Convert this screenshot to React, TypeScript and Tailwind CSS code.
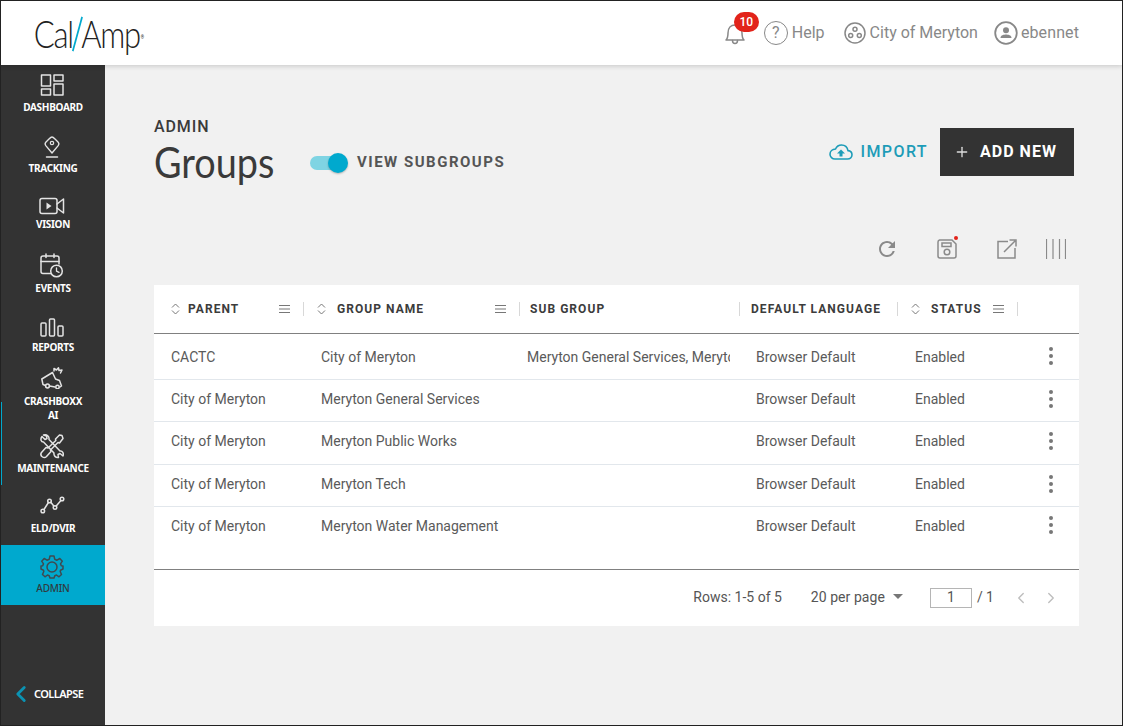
import { ChevronLeft, ChevronRight, Plus } from 'lucide-react';
import { MdRefresh } from 'react-icons/md';
import type { ReactNode } from 'react';

const stroke = {
  fill: 'none',
  stroke: 'currentColor',
  strokeWidth: 1.5,
  strokeLinecap: 'round' as const,
  strokeLinejoin: 'round' as const,
};

const DashboardIcon = () => (
  <svg width="24" height="22" viewBox="0 0 24 22" {...stroke}>
    <rect x="1.5" y="1" width="9" height="11" />
    <rect x="14" y="1" width="9" height="6" />
    <rect x="1.5" y="15" width="9" height="6" />
    <rect x="14" y="10" width="9" height="11" />
  </svg>
);

const TrackingIcon = () => (
  <svg width="16" height="22" viewBox="0 0 16 22" {...stroke}>
    <path d="M8 1 C9 1 10 2 11 3 L14 6 C15 7 15 8.5 14.2 9.6 L8 17 L1.8 9.6 C1 8.5 1 7 2 6 L5 3 C6 2 7 1 8 1 Z" strokeWidth="1.4" />
    <circle cx="8" cy="7" r="1.7" strokeWidth="1.2" />
    <path d="M2.5 21 H13.5" />
  </svg>
);

const VisionIcon = () => (
  <svg width="26" height="18" viewBox="0 0 26 18" {...stroke}>
    <rect x="1" y="1.5" width="17" height="15" rx="2" />
    <path d="M7.5 5.5 L12.5 9 L7.5 12.5 Z" fill="currentColor" stroke="none" />
    <path d="M18 7 L24.5 2 V16 L18 11" />
  </svg>
);

const EventsIcon = () => (
  <svg width="24" height="25" viewBox="0 0 24 25" {...stroke}>
    <path d="M11 20.5 H3 a2 2 0 0 1 -2 -2 V5 a2 2 0 0 1 2 -2 H17 a2 2 0 0 1 2 2 V11" />
    <path d="M1 8.5 H19" />
    <path d="M6 1 V4.5 M14 1 V4.5" />
    <circle cx="16.5" cy="18" r="5.8" />
    <path d="M16.5 14.8 V18.2 L19 19.4" strokeWidth="1.3" />
  </svg>
);

const ReportsIcon = () => (
  <svg width="24" height="19" viewBox="0 0 24 19" {...stroke}>
    <rect x="1" y="5" width="5" height="13" rx="1" />
    <rect x="9.5" y="1" width="5" height="17" rx="1" />
    <rect x="18" y="8" width="5" height="10" rx="1" />
  </svg>
);

const CrashIcon = () => (
  <svg width="22" height="22" viewBox="0 0 22 22" {...stroke}>
    <path d="M4.5 18.5 L2 17.5 L0.8 12 L11.5 5.5 L14.5 12 L18.5 13.5 L20.5 19 L19 20" />
    <path d="M8.5 19 L14 20" />
    <circle cx="6.5" cy="19" r="1.9" />
    <circle cx="16.5" cy="20" r="1.7" />
    <path d="M13 4 L13 1.5 L15.5 3 L17.5 0.8 L18 3.5 L21 3 L19.5 6" />
  </svg>
);

const MaintenanceIcon = () => (
  <svg width="24" height="25" viewBox="0 0 24 25" {...stroke}>
    <path d="M2 2.5 L5 5.5 L7 4.5 L6.5 2 L3.5 1 C7 0 9.5 2.5 9 5.5 L20 17 C22.5 16.5 24 19.5 23 22 L20 19.5 L18 20.5 L18.5 23.5 C15.5 24 13.5 21.5 14 19 L3.5 8 C1 8 0 5 2 2.5 Z" />
    <path d="M22 1.5 L19.5 1 L15.5 5 L15.8 6.5 L8 14 L6 13.5 L1.5 18.5 C0.5 20 1 22 2.5 23 C4 24 5.5 23.5 6.5 22.5 L11 17.5 L10.5 16 L18 8.5 L19.5 9 L23 4.5 Z" />
  </svg>
);

const EldIcon = () => (
  <svg width="25" height="18" viewBox="0 0 25 18" {...stroke}>
    <circle cx="2.8" cy="15" r="1.8" />
    <circle cx="9.5" cy="5" r="1.8" />
    <circle cx="15" cy="11.5" r="1.8" />
    <circle cx="22" cy="3" r="1.8" />
    <path d="M4 13.5 L8.4 6.5 M10.8 6.3 L13.8 10 M16.2 10 L20.9 4.5" />
  </svg>
);

const GearIcon = () => (
  <svg width="24" height="24" viewBox="0 0 24 24" {...stroke}>
    <circle cx="12" cy="12" r="5" />
    <path d="M10 1 H14 L14.7 4.2 L17 5.2 L19.8 3.5 L22.3 6.2 L20.5 8.9 L21.3 10.8 L23 11 V14 L20.5 15.2 L20.2 16.5 L21.5 19.5 L19 21.8 L16.5 20 L14.8 20.7 L14 23 H10 L9.2 20.7 L7.5 20 L5 21.8 L2.5 19.5 L3.8 16.5 L3.5 15.2 L1 14 V11 L2.7 10.8 L3.5 8.9 L1.7 6.2 L4.2 3.5 L7 5.2 L9.3 4.2 Z" />
  </svg>
);

const BellIcon = () => (
  <svg width="22" height="24" viewBox="0 0 22 24" {...stroke}>
    <path d="M2 18 C4 16 4 14 4 11 C4 6 7 3 11 3 C15 3 18 6 18 11 C18 14 18 16 20 18 Z" />
    <path d="M8.5 18.5 C8.5 22.5 13.5 22.5 13.5 18.5" />
  </svg>
);

const GroupIcon = () => (
  <svg width="22" height="22" viewBox="0 0 22 22" {...stroke}>
    <circle cx="11" cy="11" r="10" />
    <circle cx="11" cy="7.3" r="2" />
    <circle cx="6.7" cy="13.5" r="2" />
    <circle cx="15.3" cy="13.5" r="2" />
  </svg>
);

const UserIcon = () => (
  <svg width="24" height="24" viewBox="0 0 24 24" fill="none">
    <circle cx="12" cy="12" r="10.8" stroke="currentColor" strokeWidth="1.8" />
    <circle cx="12" cy="9.2" r="3" fill="currentColor" />
    <path d="M6.5 17 C6.5 14 10 13.5 12 13.5 C14 13.5 17.5 14 17.5 17 Z" fill="currentColor" />
  </svg>
);

const CloudIcon = () => (
  <svg width="24" height="16" viewBox="0 0 24 16" fill="none">
    <path
      d="M6 15 H18.5 C21 15 23 13.2 23 10.8 C23 8.5 21.3 6.8 19 6.6 C18.3 3.2 15.6 1 12.5 1 C9.8 1 7.6 2.6 6.5 5 C3.4 5.2 1 7.4 1 10.2 C1 12.8 3.2 15 6 15 Z"
      stroke="currentColor"
      strokeWidth="1.6"
    />
    <path d="M12 5.5 L16 9.5 H13.5 V12.5 H10.5 V9.5 H8 Z" fill="currentColor" />
  </svg>
);

const SortIcon = () => (
  <svg width="9" height="12" viewBox="0 0 9 12" fill="none" stroke="#777" strokeWidth="1">
    <path d="M1 4.5 L4.5 1 L8 4.5" />
    <path d="M1 7.5 L4.5 11 L8 7.5" />
  </svg>
);

const MenuIcon = () => (
  <svg width="11" height="8" viewBox="0 0 11 8" stroke="#777" strokeWidth="1">
    <path d="M0 0.5 H11 M0 4 H11 M0 7.5 H11" />
  </svg>
);

const Kebab = () => (
  <div className="flex flex-col gap-[3px]">
    <span className="w-1 h-1 rounded-full bg-[#777]" />
    <span className="w-1 h-1 rounded-full bg-[#777]" />
    <span className="w-1 h-1 rounded-full bg-[#777]" />
  </div>
);

type NavEntry = {
  label: ReactNode;
  icon: ReactNode;
  box: string;
  spot: string;
};

const navItems: NavEntry[] = [
  { label: 'DASHBOARD', icon: <DashboardIcon />, box: 'h-[60px]', spot: 'h-[35px] pt-[5px]' },
  { label: 'TRACKING', icon: <TrackingIcon />, box: 'h-[56px]', spot: 'h-[36px] pt-[8px]' },
  { label: 'VISION', icon: <VisionIcon />, box: 'h-[64px]', spot: 'h-[36px] pt-[14px]' },
  { label: 'EVENTS', icon: <EventsIcon />, box: 'h-[59px]', spot: 'h-[36px] pt-[4px]' },
  { label: 'REPORTS', icon: <ReportsIcon />, box: 'h-[54px]', spot: 'h-[36px] pt-[10px]' },
  { label: <>CRASHBOXX<br />AI</>, icon: <CrashIcon />, box: 'h-[67px]', spot: 'h-[36px] pt-[4px]' },
  { label: 'MAINTENANCE', icon: <MaintenanceIcon />, box: 'h-[60px]', spot: 'h-[36px] pt-[6px]' },
  { label: 'ELD/DVIR', icon: <EldIcon />, box: 'h-[60px]', spot: 'h-[36px] pt-[4px]' },
];

const NavItem = ({ item }: { item: NavEntry }) => (
  <div className={`flex flex-col items-center text-[#e4e4e4] ${item.box}`}>
    <div className={`flex items-center justify-center pr-[2px] ${item.spot}`}>{item.icon}</div>
    <div className="text-[10px] leading-[14px] font-bold text-center text-white tracking-[-0.3px] font-['Noto_Sans',sans-serif]">
      {item.label}
    </div>
  </div>
);

const Sidebar = () => (
  <aside className="w-[104px] shrink-0 bg-[#333333] flex flex-col relative">
    <div className="absolute left-0 top-[337px] h-[83px] w-px bg-[#00a9ce]" />
    {navItems.map((item, i) => (
      <NavItem key={i} item={item} />
    ))}
    <div className="h-[60px] bg-[#00a9ce] flex flex-col items-center text-[#3f4a50]">
      <div className="h-[36px] pt-[8px] pr-[2px] flex items-center justify-center">
        <GearIcon />
      </div>
      <div className="text-[10px] leading-[14px] font-medium text-[#2f3b40] tracking-[-0.2px] font-['Noto_Sans',sans-serif]">
        ADMIN
      </div>
    </div>
    <div className="mt-auto h-[62px] flex items-start pt-[21px] pl-[7px]">
      <ChevronLeft size={26} strokeWidth={2.6} className="text-[#0b93b3] -mt-[3px]" />
      <span className="text-[11px] leading-[20px] font-semibold text-white tracking-[-0.55px] font-['Noto_Sans',sans-serif]">
        COLLAPSE
      </span>
    </div>
  </aside>
);

const Header = () => (
  <header className="h-[64px] shrink-0 bg-white flex items-center justify-between relative z-10 shadow-[0_1px_5px_rgba(0,0,0,0.18)]">
    <div className="flex items-center pl-[39px] text-[#222] origin-left scale-x-[0.84]">
      <span className="font-['Lato',sans-serif] font-light text-[37px] leading-none tracking-[-1.5px]">Cal</span>
      <span className="w-[2px] h-[36px] bg-[#00a9ce] rotate-[18deg] mx-[4px] mt-[2px]" />
      <span className="font-['Lato',sans-serif] font-light text-[37px] leading-none tracking-[-1.5px]">Amp</span>
      <span className="text-[5px] self-start mt-[20px] ml-[1px]">®</span>
    </div>
    <div className="flex items-center pr-[43px] text-[#888888] text-[16px] font-['Roboto',sans-serif]">
      <div className="relative mr-[18px] mt-[2px]">
        <BellIcon />
        <span className="absolute -top-[10px] left-[10px] w-[25px] h-[20px] rounded-full bg-[#e2231a] text-white text-[12px] font-medium flex items-center justify-center">
          10
        </span>
      </div>
      <div className="w-[24px] h-[24px] rounded-full border-[1.5px] border-[#888] flex items-center justify-center text-[16px] text-[#888] mr-[4px]">
        ?
      </div>
      <span>Help</span>
      <span className="ml-[19px] mr-[4px]"><GroupIcon /></span>
      <span>City of Meryton</span>
      <span className="ml-[16px] mr-[3px]"><UserIcon /></span>
      <span className="tracking-[0.1px]">ebennet</span>
    </div>
  </header>
);

const gridCols = 'grid grid-cols-[150px_216px_220px_158px_120px_61px]';

const HeadCell = ({ label, sort, menu, pad, gap }: { label: string; sort?: boolean; menu?: boolean; pad: string; gap?: string }) => (
  <div className={`flex items-center h-[14px] border-r border-[#d8d8d8] ${pad}`}>
    {sort && <span className={`flex ${gap}`}><SortIcon /></span>}
    <span className="text-[12px] font-bold tracking-[1.05px] text-[#3c3c3c] whitespace-nowrap">{label}</span>
    {menu && <span className="ml-auto flex"><MenuIcon /></span>}
  </div>
);

const rows = [
  { parent: 'CACTC', name: 'City of Meryton', sub: 'Meryton General Services, Meryton Public Works', h: 'h-[46px] pt-[1px]' },
  { parent: 'City of Meryton', name: 'Meryton General Services', sub: '', h: 'h-[42px] pb-[2px]' },
  { parent: 'City of Meryton', name: 'Meryton Public Works', sub: '', h: 'h-[43px] pb-[3px]' },
  { parent: 'City of Meryton', name: 'Meryton Tech', sub: '', h: 'h-[42px] pb-[2px]' },
];

const Row = ({ parent, name, sub, h, last }: { parent: string; name: string; sub: string; h: string; last?: boolean }) => (
  <div className={`${gridCols} items-center text-[14px] text-[#5a5a5a] ${h} ${last ? '' : 'border-b border-[#e2e7ec]'}`}>
    <div className="pl-[17px]">{parent}</div>
    <div className="pl-[17px] whitespace-nowrap">{name}</div>
    <div className="ml-[7px] w-[203px] overflow-hidden whitespace-nowrap">{sub}</div>
    <div className="pl-[16px]">Browser Default</div>
    <div className="pl-[17px]">Enabled</div>
    <div className="flex justify-end pr-[26px] -mt-[2px]"><Kebab /></div>
  </div>
);

const GroupsTable = () => (
  <div className="bg-white h-[341px] flex flex-col">
    <div className={`${gridCols} h-[49px] items-center border-b border-[#808080] shrink-0`}>
      <HeadCell label="PARENT" sort menu pad="pl-[17px] pr-[13px]" gap="mr-[8px]" />
      <HeadCell label="GROUP NAME" sort menu pad="pl-[13px] pr-[13px]" gap="mr-[11px]" />
      <HeadCell label="SUB GROUP" pad="pl-[10px]" />
      <HeadCell label="DEFAULT LANGUAGE" pad="pl-[11px]" />
      <HeadCell label="STATUS" sort menu pad="pl-[13px] pr-[13px]" gap="mr-[11px]" />
      <div />
    </div>
    {rows.map((r) => (
      <Row key={r.name} {...r} />
    ))}
    <Row parent="City of Meryton" name="Meryton Water Management" sub="" h="h-[40px] pb-[2px]" last />
    <div className="flex-1 border-b border-[#808080]" />
    <div className="h-[56px] shrink-0 flex items-center justify-end pr-[19px] pb-[1px] text-[14px] text-[#555]">
      <span>Rows: 1-5 of 5</span>
      <span className="ml-[29px] tracking-[0.05px]">20 per page</span>
      <span className="ml-[8px] mb-[3px] w-0 h-0 border-x-[5px] border-x-transparent border-t-[5px] border-t-[#777]" />
      <div className="ml-[27px] w-[42px] h-[20px] border border-[#b5b5b5] flex items-center justify-center">1</div>
      <span className="ml-[5px]">/ 1</span>
      <ChevronLeft size={18} strokeWidth={1.8} className="ml-[18px] text-[#bdbdbd]" />
      <ChevronRight size={18} strokeWidth={1.8} className="ml-[12px] text-[#bdbdbd]" />
    </div>
  </div>
);

const Toolbar = () => (
  <div className="flex justify-end items-center h-[26px] text-[#8a8a8a] pr-[13px]">
    <MdRefresh size={24} />
    <span className="relative ml-[38px]">
      <svg width="20" height="20" viewBox="0 0 20 20" fill="none" stroke="currentColor" strokeWidth="1.5" className="block">
        <path d="M2.5 1 H15 L19 5 V17 a2 2 0 0 1 -2 2 H3 a2 2 0 0 1 -2 -2 V3 a2 2 0 0 1 1.5 -2 Z" />
        <rect x="5" y="4" width="9" height="3.5" />
        <circle cx="10" cy="13" r="2.8" />
      </svg>
      <span className="absolute -top-[3px] -right-[1px] w-[4px] h-[4px] rounded-full bg-[#e2231a]" />
    </span>
    <svg className="ml-[40px]" width="20" height="20" viewBox="0 0 20 20" fill="none" stroke="currentColor" strokeWidth="1.5">
      <path d="M11 2.5 H1 V19 H18 V9" />
      <path d="M7 13 L18 2 M12.5 1 H19 V7.5" />
    </svg>
    <svg className="ml-[29px]" width="20" height="20" viewBox="0 0 20 20" stroke="currentColor" strokeWidth="1.2">
      <path d="M0.5 0 V20 M7 0 V20 M13.5 0 V20 M19.5 0 V20" />
    </svg>
  </div>
);

export default function App() {
  return (
    <div className="w-[1123px] h-[726px] border border-[#222] flex flex-col bg-[#f1f1f1] font-['Roboto',sans-serif] overflow-hidden">
      <Header />
      <div className="flex flex-1 min-h-0">
        <Sidebar />
        <main className="flex-1 pl-[49px] pr-[43px] pt-[52px]">
          <div className="flex items-start h-[71px]">
            <div className="w-[156px]">
              <div className="text-[16px] leading-[19px] font-medium tracking-[0.9px] text-[#3a3a3a]">ADMIN</div>
              <div className="text-[42px] leading-[44px] mt-[4px] text-[#3a3a3a] font-['Lato',sans-serif] font-normal origin-left scale-x-[0.9]">Groups</div>
            </div>
            <div className="flex items-center mt-[35px]">
              <div className="relative w-[33px] h-[14px] rounded-full bg-[#7fd4e3]">
                <span className="absolute -right-[5px] -top-[3px] w-5 h-5 rounded-full bg-[#00a9ce] shadow-[0_1px_2px_rgba(0,0,0,0.25)]" />
              </div>
              <span className="ml-[14px] -mt-[1px] text-[15px] font-bold tracking-[1.5px] text-[#555]">VIEW SUBGROUPS</span>
            </div>
            <div className="ml-auto flex items-start mr-[5px] mt-[11px]">
              <div className="flex items-center h-[48px] text-[#1d9cb8]">
                <CloudIcon />
                <span className="ml-[8px] text-[16px] font-medium tracking-[1.4px]">IMPORT</span>
              </div>
              <button className="ml-[12px] w-[134px] h-[48px] bg-[#333333] text-white flex items-center justify-center pr-[3px] text-[16px] font-bold tracking-[1px]">
                <Plus size={16} strokeWidth={2} className="mr-[10px] text-[#dcdcdc]" />
                ADD NEW
              </button>
            </div>
          </div>
          <div className="mt-[48px]">
            <Toolbar />
          </div>
          <div className="mt-[23px]">
            <GroupsTable />
          </div>
        </main>
      </div>
    </div>
  );
}
